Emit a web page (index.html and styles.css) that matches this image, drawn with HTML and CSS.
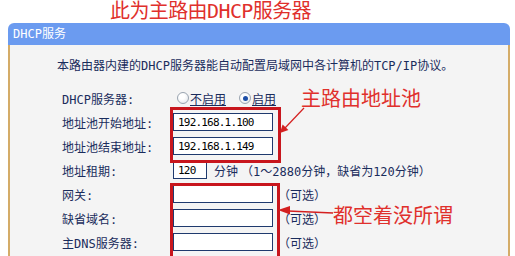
FILE: index.html
```html
<!DOCTYPE html>
<html>
<head>
  <title>DHCP服务</title>
  <link rel="stylesheet" href="styles.css">
</head>
<body>
  <div class="page">
    <h1 class="title">此为主路由DHCP服务器</h1>

    <div class="panel">
      <div class="panel-head">DHCP服务</div>
      <div class="panel-body">
        <p class="intro">本路由器内建的DHCP服务器能自动配置局域网中各计算机的TCP/IP协议。</p>

        <div class="form">
          <div class="row">
            <span class="label">DHCP服务器:</span>
            <div class="field">
              <span class="radio"></span><span class="opt">不启用</span>
              <span class="radio checked second"></span><span class="opt">启用</span>
            </div>
          </div>
          <div class="row">
            <span class="label">地址池开始地址:</span>
            <div class="field"><input type="text" class="ip" value="192.168.1.100"></div>
          </div>
          <div class="row">
            <span class="label">地址池结束地址:</span>
            <div class="field"><input type="text" class="ip" value="192.168.1.149"></div>
          </div>
          <div class="row">
            <span class="label">地址租期:</span>
            <div class="field">
              <input type="text" class="lease" value="120">
              <span class="unit">分钟</span>
              <span class="note">（1～2880分钟，缺省为120分钟）</span>
            </div>
          </div>
          <div class="row">
            <span class="label">网关:</span>
            <div class="field"><input type="text" class="ip"><span class="note optional">（可选）</span></div>
          </div>
          <div class="row">
            <span class="label">缺省域名:</span>
            <div class="field"><input type="text" class="ip"><span class="note optional">（可选）</span></div>
          </div>
          <div class="row">
            <span class="label">主DNS服务器:</span>
            <div class="field"><input type="text" class="ip"><span class="note optional">（可选）</span></div>
          </div>
        </div>
      </div>
    </div>

    <!-- red annotations drawn over the screenshot -->
    <div class="mark mark-pool"></div>
    <div class="mark mark-empty"></div>
    <div class="callout callout-pool">主路由地址池</div>
    <div class="callout callout-empty">都空着没所谓</div>
    <svg class="arrows" width="515" height="256" viewBox="0 0 515 256">
      <line x1="304" y1="108" x2="285" y2="128" stroke="#d42020" stroke-width="1.2"/>
      <polygon points="280,133 288.4,130 282.6,124.4" fill="#d42020"/>
      <line x1="333" y1="213" x2="288" y2="211" stroke="#d42020" stroke-width="1.5"/>
      <polygon points="278,210 290,206 290,214.5" fill="#d42020"/>
    </svg>
  </div>
</body>
</html>
```

FILE: styles.css
```css
html, body {
  margin: 0;
  overflow: hidden;
  background-color: #fff;
}
body {
  font-family: "DejaVu Sans Mono", "Noto Sans CJK SC", monospace;
  font-size: 12px;
  color: #1a2c5c;
}
.page {
  position: relative;
  width: 515px;
  height: 256px;
  overflow: hidden;
}
.title {
  margin: 0;
  padding-left: 110px;
  height: 23px;
  line-height: 23px;
  font-size: 20px;
  font-weight: normal;
  letter-spacing: -0.6px;
  color: #e0302c;
}
.panel {
  margin-left: 8px;
  width: 502px;
}
.panel-head {
  height: 22px;
  line-height: 22px;
  padding-left: 5px;
  background-color: #6b9bf0;
  color: #fff;
  border-radius: 6px 6px 0 0;
}
.panel-body {
  background-color: #f4f4f4;
  border-left: 2px solid #d4ac68;
  border-right: 2px solid #d4ac68;
  padding: 12px 0 0 47px;
  height: 199px;
}
.intro {
  margin: 0;
  line-height: 18px;
  height: 18px;
}
.form {
  margin-top: 11px;
  padding-left: 5px;
}
.row {
  display: grid;
  grid-template-columns: 111px auto;
  align-items: center;
  height: 24px;
}
.field {
  display: flex;
  align-items: center;
}
input {
  box-sizing: border-box;
  margin: 0;
  border: 1px solid #1f3a6e;
  background-color: #fff;
  font-family: "DejaVu Sans Mono", monospace;
  font-size: 11px;
  letter-spacing: -0.8px;
  color: #000;
  padding: 0 0 0 4px;
  outline: none;
}
input.ip {
  width: 100px;
  height: 18px;
}
input.lease {
  width: 34px;
  height: 17px;
}
.radio {
  box-sizing: border-box;
  width: 12px;
  height: 12px;
  margin-left: 4px;
  border-radius: 50%;
  border: 1px solid #9aa4b0;
  background: radial-gradient(circle at 40% 35%, #fff 0, #fff 30%, #dde2e8 100%);
  position: relative;
}
.radio.second {
  margin-left: 13px;
}
.radio.checked::after {
  content: "";
  position: absolute;
  left: 2.5px;
  top: 2.5px;
  width: 5px;
  height: 5px;
  border-radius: 50%;
  background: #1d4fa8;
}
.opt {
  margin-left: 1px;
  text-decoration: underline;
  text-decoration-color: #1a2c5c;
}
.unit {
  margin-left: 7px;
}
.note {
  margin-left: 3px;
}
.note.optional {
  margin-left: 5px;
}
.mark {
  position: absolute;
  box-sizing: border-box;
  border: 3px solid #c8161d;
}
.mark-pool {
  left: 170px;
  top: 107px;
  width: 111px;
  height: 56px;
}
.mark-empty {
  left: 170px;
  top: 183px;
  width: 110px;
  height: 80px;
}
.callout {
  position: absolute;
  font-family: "Noto Sans CJK SC", sans-serif;
  font-size: 20px;
  line-height: 24px;
  color: #e0302c;
}
.callout-pool {
  left: 301px;
  top: 86px;
}
.callout-empty {
  left: 333px;
  top: 203px;
}
.arrows {
  position: absolute;
  left: 0;
  top: 0;
  pointer-events: none;
}
```
